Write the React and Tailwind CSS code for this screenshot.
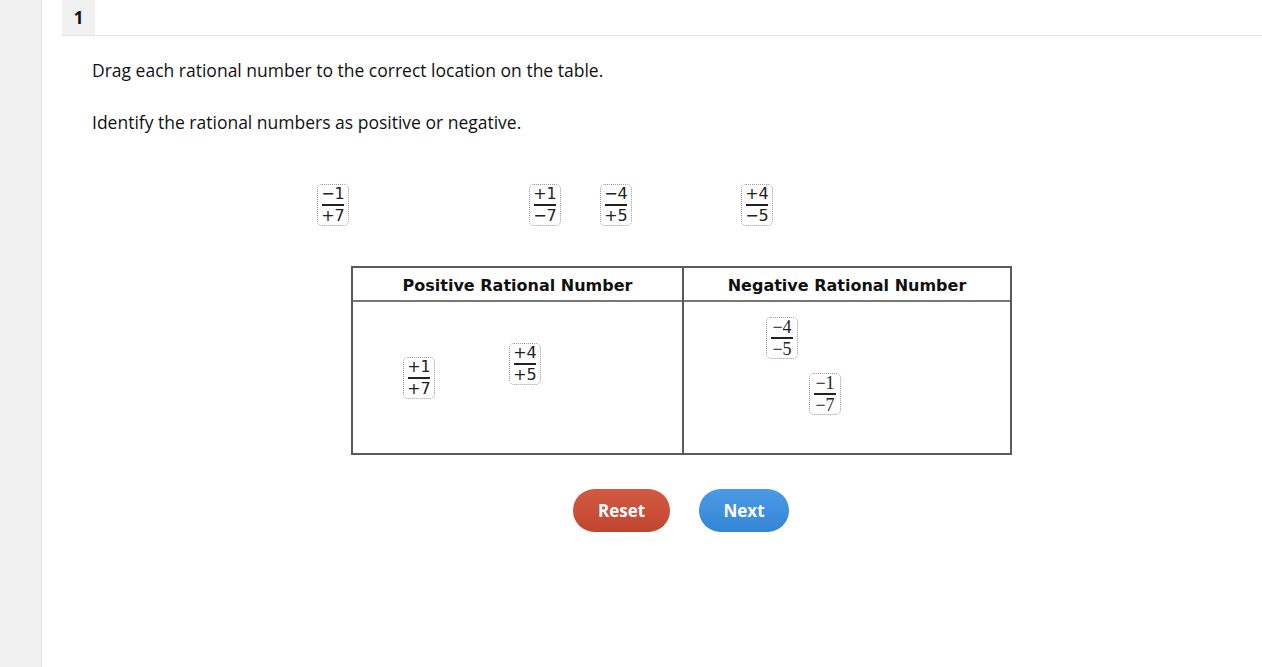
import React from 'react'

function Tile({ num, den, x, y, serif }) {
  return (
    <div
      className="absolute flex flex-col items-center justify-center rounded-[5px] border border-dotted border-[#9a9a9a] bg-white leading-none text-[#222]"
      style={{ left: x, top: y, width: 32, height: 42, fontFamily: serif ? '"Liberation Serif", serif' : '"DejaVu Sans", sans-serif' }}
    >
      <span className={serif ? 'shrink-0 text-[18px] leading-[16px]' : 'shrink-0 text-[16px] leading-[16px]'}>{num}</span>
      <span className="my-[2px] h-[2px] w-[22px] shrink-0 bg-[#222]" />
      <span className={serif ? 'shrink-0 text-[18px] leading-[16px]' : 'shrink-0 text-[16px] leading-[16px]'}>{den}</span>
    </div>
  )
}

export default function App() {
  return (
    <div className="flex h-[667px] w-[1262px] overflow-hidden bg-white" style={{ fontFamily: '"Open Sans", sans-serif' }}>
      <div className="w-[42px] shrink-0 border-r border-[#e2e2e2] bg-[#f1f1f1]" />
      <div className="flex-1 pl-[20px]">
        <div className="flex h-[36px] border-b border-[#e4e4e4]">
          <div className="flex w-[33px] items-center justify-center bg-[#f1f1f1] text-[17px] font-bold text-[#111]">1</div>
        </div>
        <div className="pl-[30px] pt-[22px] text-[17.5px] text-[#111]">
          <p className="leading-[24px]">Drag each rational number to the correct location on the table.</p>
          <p className="mt-[28px] leading-[24px]">Identify the rational numbers as positive or negative.</p>
        </div>

        <div className="relative h-[100px]">
          <Tile num="−1" den="+7" x={255} y={50} />
          <Tile num="+1" den="−7" x={467} y={50} />
          <Tile num="−4" den="+5" x={538} y={50} />
          <Tile num="+4" den="−5" x={679} y={50} />
        </div>

        <div className="ml-[289px] mt-[32px] flex w-[661px] border-2 border-[#5a5a5a]" style={{ fontFamily: '"DejaVu Sans", sans-serif' }}>
          <div className="flex w-[331px] flex-col border-r-2 border-[#5a5a5a]">
            <div className="flex h-[34px] items-center justify-center border-b-2 border-[#777] pt-[4px] text-[16px] font-bold text-[#111]">Positive Rational Number</div>
            <div className="relative h-[151px]">
              <Tile num="+1" den="+7" x={50} y={55} />
              <Tile num="+4" den="+5" x={156} y={41} />
            </div>
          </div>
          <div className="flex flex-1 flex-col">
            <div className="flex h-[34px] items-center justify-center border-b-2 border-[#777] pt-[4px] text-[16px] font-bold text-[#111]">Negative Rational Number</div>
            <div className="relative h-[151px]">
              <Tile num="−4" den="−5" x={82} y={15} serif />
              <Tile num="−1" den="−7" x={125} y={71} serif />
            </div>
          </div>
        </div>

        <div className="ml-[511px] mt-[34px] flex gap-[29px]">
          <button className="h-[43px] w-[97px] rounded-full bg-gradient-to-b from-[#d35a42] to-[#c0452f] text-[17px] font-bold text-white">Reset</button>
          <button className="h-[43px] w-[90px] rounded-full bg-gradient-to-b from-[#4a9be6] to-[#3585d6] text-[17px] font-bold text-white">Next</button>
        </div>
      </div>
    </div>
  )
}
